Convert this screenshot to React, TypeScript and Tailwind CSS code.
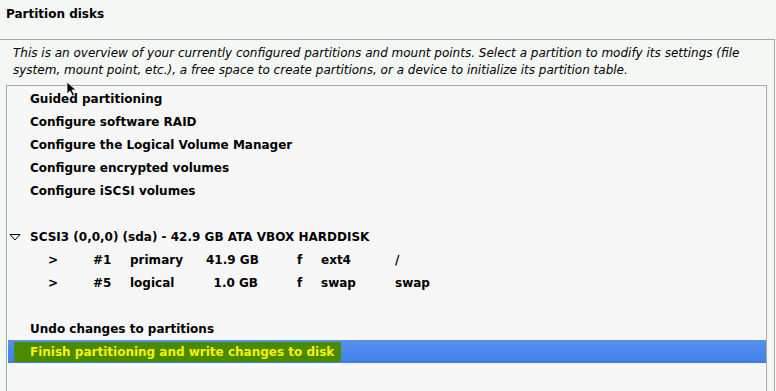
import React from "react";

const menu = [
  "Guided partitioning",
  "Configure software RAID",
  "Configure the Logical Volume Manager",
  "Configure encrypted volumes",
  "Configure iSCSI volumes",
];

const parts = [
  { num: "#1", type: "primary", size: "41.9 GB", flag: "f", fs: "ext4", mount: "/" },
  { num: "#5", type: "logical", size: "1.0 GB", flag: "f", fs: "swap", mount: "swap" },
];

const Row = ({ children }: { children: React.ReactNode }) => (
  <div className="h-[23px] flex items-center pl-[23px] whitespace-nowrap">{children}</div>
);

export default function App() {
  return (
    <div
      className="relative w-[776px] h-[391px] overflow-hidden bg-[#f4f8f5] text-[12px] text-black"
      style={{ fontFamily: '"DejaVu Sans", Verdana, sans-serif' }}
    >
      <div className="h-[39px] pl-[6px] pt-[6px] font-bold leading-[16px]">Partition disks</div>

      <div className="w-[775px] h-[352px] border-t border-r border-[#a9a9a9]">
        <div className="pl-[13px] pt-[5px] pb-[6px] italic leading-[17px]">
          This is an overview of your currently configured partitions and mount points. Select a partition to modify its settings (file
          system, mount point, etc.), a free space to create partitions, or a device to initialize its partition table.
        </div>

        <div className="ml-[6px] w-[761px] h-[320px] pt-[1px] border border-[#a9a9a9] bg-[#f7f7f7] font-bold">
          {menu.map((m) => (
            <Row key={m}>{m}</Row>
          ))}
          <Row>{""}</Row>
          <div className="h-[23px] flex items-center whitespace-nowrap">
            <svg width="12" height="8" viewBox="0 0 12 8" className="ml-[2px] mr-[9px]">
              <path d="M1 1.5 L11 1.5 L6 7 Z" fill="none" stroke="#000" strokeWidth="1" />
            </svg>
            SCSI3 (0,0,0) (sda) - 42.9 GB ATA VBOX HARDDISK
          </div>
          {parts.map((p) => (
            <div key={p.num} className="h-[23px] flex items-center whitespace-nowrap pl-[41px]">
              <span className="w-[45px]">&gt;</span>
              <span className="w-[37px]">{p.num}</span>
              <span className="w-[76px]">{p.type}</span>
              <span className="w-[52px] text-right">{p.size}</span>
              <span className="ml-[39px] w-[24px]">{p.flag}</span>
              <span className="w-[74px]">{p.fs}</span>
              <span>{p.mount}</span>
            </div>
          ))}
          <Row>{""}</Row>
          <Row>Undo changes to partitions</Row>
          <div className="ml-[1px] h-[23px] flex items-center bg-gradient-to-b from-[#5893f1] to-[#3e7ee6]">
            <div className="ml-[6px] h-[20px] w-[327px] bg-[#4a8a00] flex items-center pl-[16px] text-[#f4f400] whitespace-nowrap">
              Finish partitioning and write changes to disk
            </div>
          </div>
        </div>
      </div>

      <svg width="12" height="16" viewBox="0 0 12 16" className="absolute left-[66px] top-[81px]">
        <path d="M1 1 L1 13 L4 10 L6.5 15 L8.5 14 L6 9 L10 9 Z" fill="#000" stroke="#fff" strokeWidth="0.8" />
      </svg>
    </div>
  );
}
